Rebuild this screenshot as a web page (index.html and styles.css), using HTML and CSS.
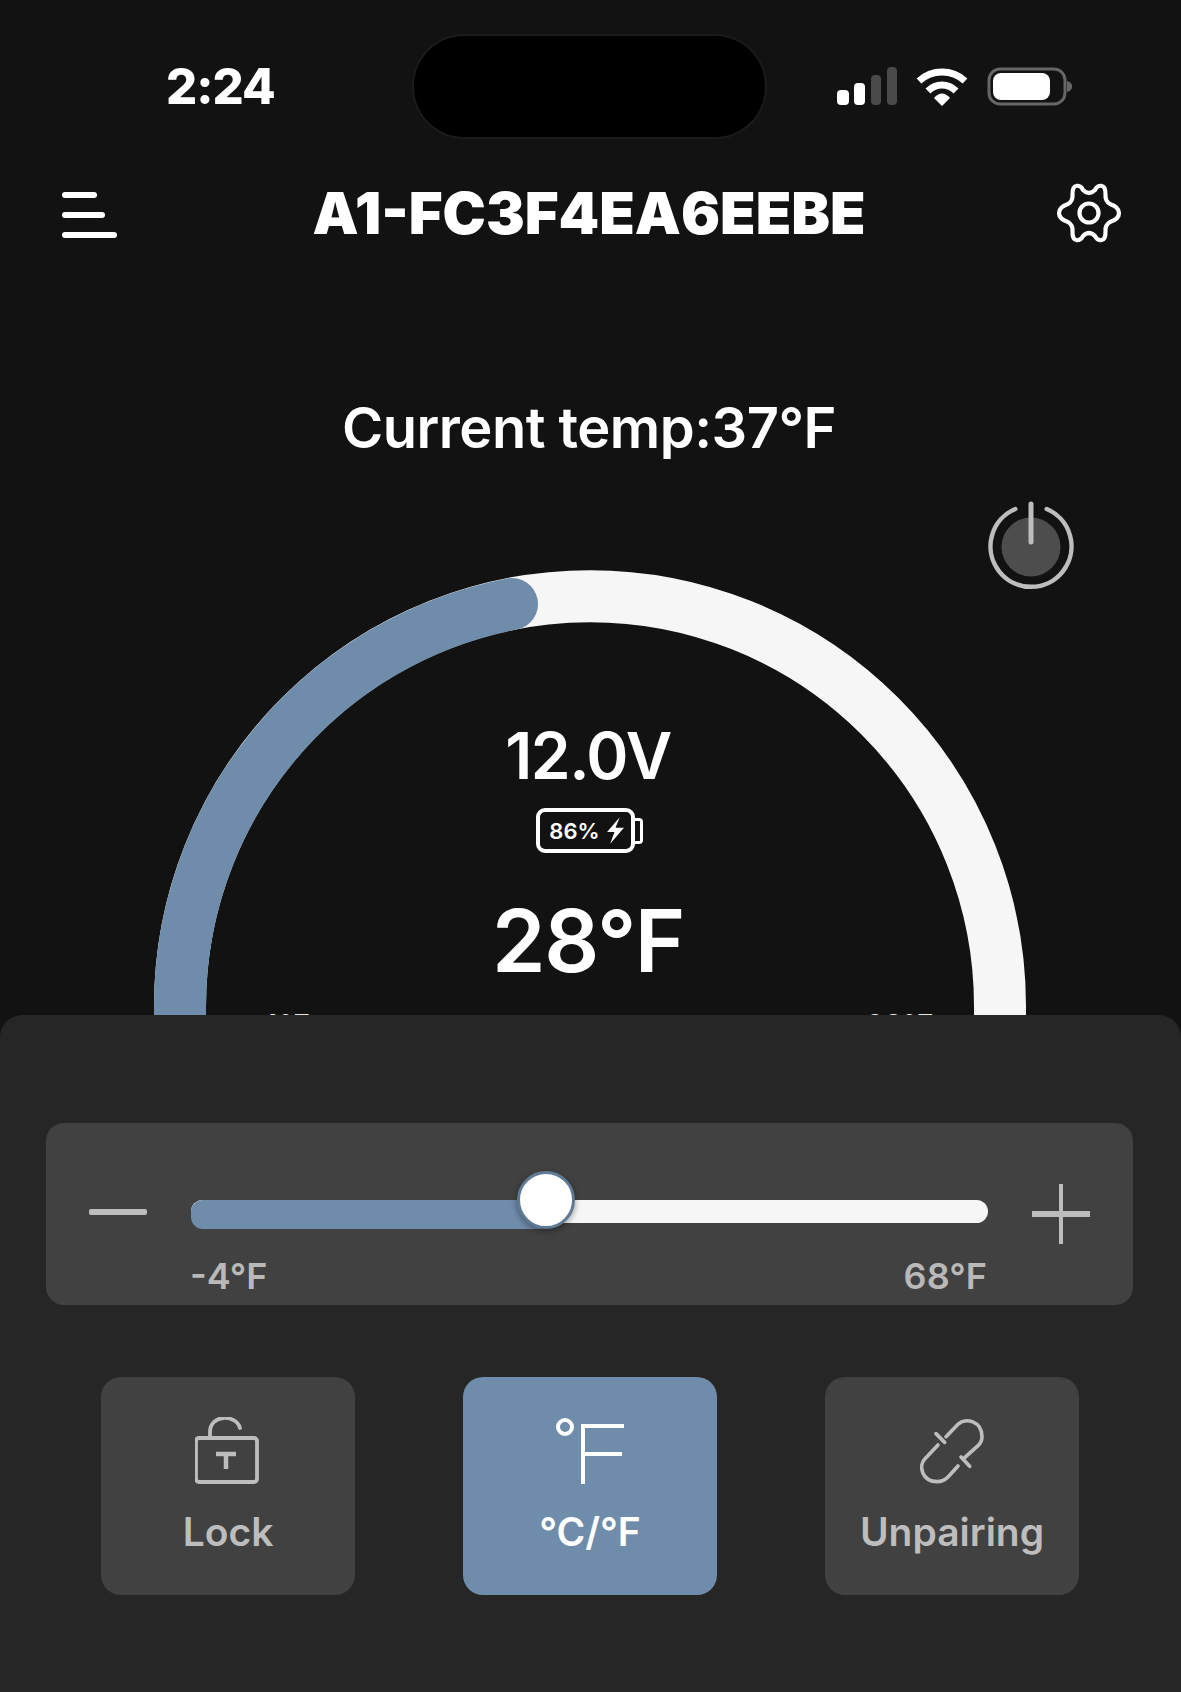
FILE: index.html
```html
<!DOCTYPE html>
<html lang="en">
<head>
<meta charset="utf-8">
<title>A1-FC3F4EA6EEBE</title>
<link rel="stylesheet" href="styles.css">
</head>
<body>
<div class="phone">
  <div class="status">
    <span class="time">2:24</span>
    <div class="island"></div>
    <svg class="status-icons" width="236" height="40" viewBox="0 0 236 40">
      <rect x="0" y="23" width="12" height="15" rx="4" fill="#fff"/>
      <rect x="17" y="16" width="11" height="22" rx="4" fill="#fff"/>
      <rect x="34" y="8" width="10" height="30" rx="4" fill="#4a4a4a"/>
      <rect x="50" y="0" width="10" height="38" rx="4" fill="#4a4a4a"/>
      <path d="M82 14C95 2 115 2 128 14" fill="none" stroke="#fff" stroke-width="7"/>
      <path d="M91 24C99 16 111 16 119 24" fill="none" stroke="#fff" stroke-width="7"/>
      <path d="M97 31C102 25 108 25 113 31L105 39Z" fill="#fff"/>
      <rect x="152" y="2" width="76" height="35" rx="11" fill="none" stroke="#666" stroke-width="3"/>
      <rect x="156" y="6" width="57" height="27" rx="8" fill="#fff"/>
      <path d="M230 14C234 15 235 17 235 19.500C235 22 234 24 230 25Z" fill="#666"/>
    </svg>
  </div>

  <header class="topbar">
    <div class="menu"><i class="m1"></i><i class="m2"></i><i class="m3"></i></div>
    <h1 class="title">A1-FC3F4EA6EEBE</h1>
    <svg class="gear" width="66" height="60" viewBox="-33 -30 66 60" fill="none" stroke="#fff" stroke-width="4.200" stroke-linejoin="round">
      <path d="M21 -9C33 -5 33 5 21 9Q16 12 16.500 18C17 31 8 28 6 23Q0 17 -6 23C-8 28 -17 31 -16.500 18Q-16 12 -21 9C-33 5 -33 -5 -21 -9Q-16 -12 -16.500 -18C-17 -31 -8 -28 -6 -23Q0 -17 6 -23C8 -28 17 -31 16.500 -18Q16 -12 21 -9Z"/>
      <circle cx="0" cy="0" r="9.500"/>
    </svg>
  </header>

  <p class="current">Current temp:37°F</p>

  <section class="gauge">
    <svg class="arc" width="900" height="520" viewBox="0 0 900 520">
      <path d="M860 520V452A410 410 0 0 0 40 452V520" fill="none" stroke="#f6f6f6" stroke-width="52"/>
      <path d="M40 520V452A410 410 0 0 1 372 50" fill="none" stroke="#6f8cab" stroke-width="52" stroke-linecap="round"/>
    </svg>
    <svg class="power" width="88" height="92" viewBox="0 0 88 92">
      <circle cx="44" cy="47" r="29.500" fill="#4d4d4d"/>
      <path d="M28.300 9A40.500 40.500 0 1 0 59.700 9" fill="none" stroke="#bdbdbd" stroke-width="4.500" stroke-linecap="round"/>
      <path d="M44 4V42" stroke="#bdbdbd" stroke-width="5" stroke-linecap="round"/>
    </svg>
    <span class="end end-min">-4°F</span>
    <span class="end end-max">68°F</span>
    <div class="readout">
      <div class="volt">12.0V</div>
      <div class="batt">
        <div class="batt-body">
          <span class="batt-pct">86%</span>
          <svg width="19" height="27" viewBox="0 0 18 25"><path d="M13 0 1 14h7l-4 11L17 10H9z" fill="#fff"/></svg>
        </div>
        <div class="batt-cap"></div>
      </div>
      <div class="temp">28°F</div>
    </div>
  </section>

  <section class="sheet">
    <div class="panel">
      <div class="slider-row">
        <div class="minus"></div>
        <div class="track">
          <div class="fill"></div>
          <div class="thumb"></div>
        </div>
        <svg class="plus" width="58" height="60" viewBox="0 0 58 60">
          <path d="M0 30H58" stroke="#bdbdbd" stroke-width="6"/>
          <path d="M29 0V60" stroke="#bdbdbd" stroke-width="4"/>
        </svg>
      </div>
      <div class="limits"><span>-4°F</span><span>68°F</span></div>
    </div>
    <div class="actions">
      <button class="action">
        <svg width="67" height="68" viewBox="2 0 67 68" fill="none" stroke="#bdbdbd" stroke-width="3.800">
          <rect x="3" y="21" width="61" height="44" rx="3"/>
          <path d="M17 20V15C17 -3 43 -3 47 11" stroke-linecap="round"/>
          <path d="M23 37H43M33 37V52" stroke-width="4.500"/>
        </svg>
        <span>Lock</span>
      </button>
      <button class="action active">
        <svg width="68" height="68" viewBox="0 0 68 68" fill="none" stroke="#fff" stroke-width="4">
          <circle cx="9" cy="10" r="7"/>
          <path d="M27 67V9H68M27 37H66"/>
        </svg>
        <span>°C/°F</span>
      </button>
      <button class="action">
        <svg width="68" height="68" viewBox="58 38 204 204" fill="none" stroke="#bdbdbd" stroke-width="11" stroke-linecap="round">
          <path d="M142 97L178 60C200 38 250 50 250 97C250 110 244 118 238 124L198 160"/>
          <path d="M118 122L82 160C55 185 72 232 115 232C130 232 140 226 148 218L178 185"/>
          <path d="M112 88L138 114M187 158L213 186"/>
        </svg>
        <span>Unpairing</span>
      </button>
    </div>
  </section>
</div>
</body>
</html>
```

FILE: styles.css
```css
* { box-sizing: border-box; }
html, body { margin: 0; padding: 0; background: #121212; }
.phone {
  width: 1181px;
  height: 1692px;
  overflow: hidden;
  display: flex;
  flex-direction: column;
  background: #121212;
  color: #fff;
  font-family: Inter, "Liberation Sans", sans-serif;
}
.status {
  height: 150px;
  padding: 36px 108px 0 167px;
  display: flex;
  align-items: flex-start;
}
.time { font-size: 49px; font-weight: 800; line-height: 60px; margin-top: 21px; margin-left: -1px; width: 248px; letter-spacing: -1px; }
.island {
  width: 351px;
  height: 101px;
  border-radius: 50px;
  background: #000;
  box-shadow: 0 0 0 2px #1b1b1b;
}
.status-icons { margin: 31px 0 0 auto; }
.topbar {
  height: 126px;
  padding: 0 59px 0 62px;
  display: flex;
  align-items: center;
  justify-content: space-between;
}
.menu { width: 56px; margin-top: 3px; display: flex; flex-direction: column; gap: 14px; }
.menu i { display: block; height: 6px; border-radius: 3px; background: #fff; }
.m1 { width: 35px; }
.m2 { width: 43px; }
.m3 { width: 55px; }
.title {
  margin: 0 0 0 4px;
  font-size: 58px;
  font-weight: 900;
  line-height: 64px;
}
.current {
  margin: 122px 3px 0 0;
  text-align: center;
  font-size: 56px;
  font-weight: 600;
  line-height: 60px;
  letter-spacing: -0.5px;
}
.gauge {
  position: relative;
  flex: 1;
  min-height: 0;
  display: flex;
  justify-content: center;
}
.arc { position: absolute; left: 140px; top: 96px; }
.power { position: absolute; left: 987px; top: 42px; }
.end { position: absolute; top: 549px; font-size: 30px; font-weight: 500; color: #e6e6e6; }
.end-min { left: 246px; }
.end-max { left: 865px; }
.readout { display: flex; flex-direction: column; align-items: center; margin-top: 260px; }
.volt { font-size: 64px; font-weight: 600; line-height: 76px; letter-spacing: -1.5px; margin-left: -5px; }
.batt { display: flex; align-items: center; margin-top: 14px; margin-left: -2px; }
.batt-body {
  width: 99px;
  height: 45px;
  border: 4px solid #fff;
  border-radius: 9px;
  display: flex;
  align-items: center;
  justify-content: center;
  gap: 6px;
  padding-left: 3px;
}
.batt-pct { font-size: 22px; font-weight: 600; line-height: 26px; }
.batt-cap {
  width: 8px;
  height: 26px;
  border: 3px solid #fff;
  border-left: 0;
  border-radius: 0 4px 4px 0;
}
.temp { font-size: 86px; font-weight: 600; line-height: 100px; margin: 38px 0 0 -5px; letter-spacing: -1.5px; }
.sheet {
  position: relative;
  height: 677px;
  flex: none;
  background: #262626;
  border-radius: 22px 22px 0 0;
  padding: 108px 48px 0 46px;
}
.panel {
  height: 182px;
  border-radius: 18px;
  background: #414141;
  padding: 61px 43px 0 43px;
}
.slider-row { display: flex; align-items: center; height: 60px; }
.minus { width: 58px; height: 6px; margin-top: -4px; background: #bdbdbd; border-radius: 2px; }
.track {
  position: relative;
  width: 797px;
  height: 23px;
  margin: -6px 44px 0 44px;
  border-radius: 12px;
  background: #f6f6f6;
}
.fill {
  position: absolute;
  left: 0;
  top: 0;
  width: 350px;
  height: 29px;
  border-radius: 12px 0 0 12px;
  background: #6f8cab;
}
.thumb {
  position: absolute;
  left: 326px;
  top: -29px;
  width: 58px;
  height: 58px;
  border-radius: 50%;
  background: #fff;
  border: 3px solid #607a95;
  box-shadow: 0 2px 6px rgba(0,0,0,.4);
}
.plus { flex: none; }
.limits {
  display: flex;
  justify-content: space-between;
  margin: 11px 0 0 101px;
  width: 797px;
  font-size: 36px;
  font-weight: 600;
  line-height: 42px;
  color: #b9b9b9;
}
.actions {
  display: flex;
  justify-content: space-between;
  margin: 72px 54px 0 55px;
}
.action {
  width: 254px;
  height: 218px;
  border: 0;
  padding: 40px 0 0;
  border-radius: 20px;
  background: #414141;
  color: #bdbdbd;
  font-family: inherit;
  font-size: 39px;
  font-weight: 600;
  display: flex;
  flex-direction: column;
  align-items: center;
  gap: 24px;
}
.action span { line-height: 46px; }
.action.active { background: #6f8cab; color: #fff; }
```
